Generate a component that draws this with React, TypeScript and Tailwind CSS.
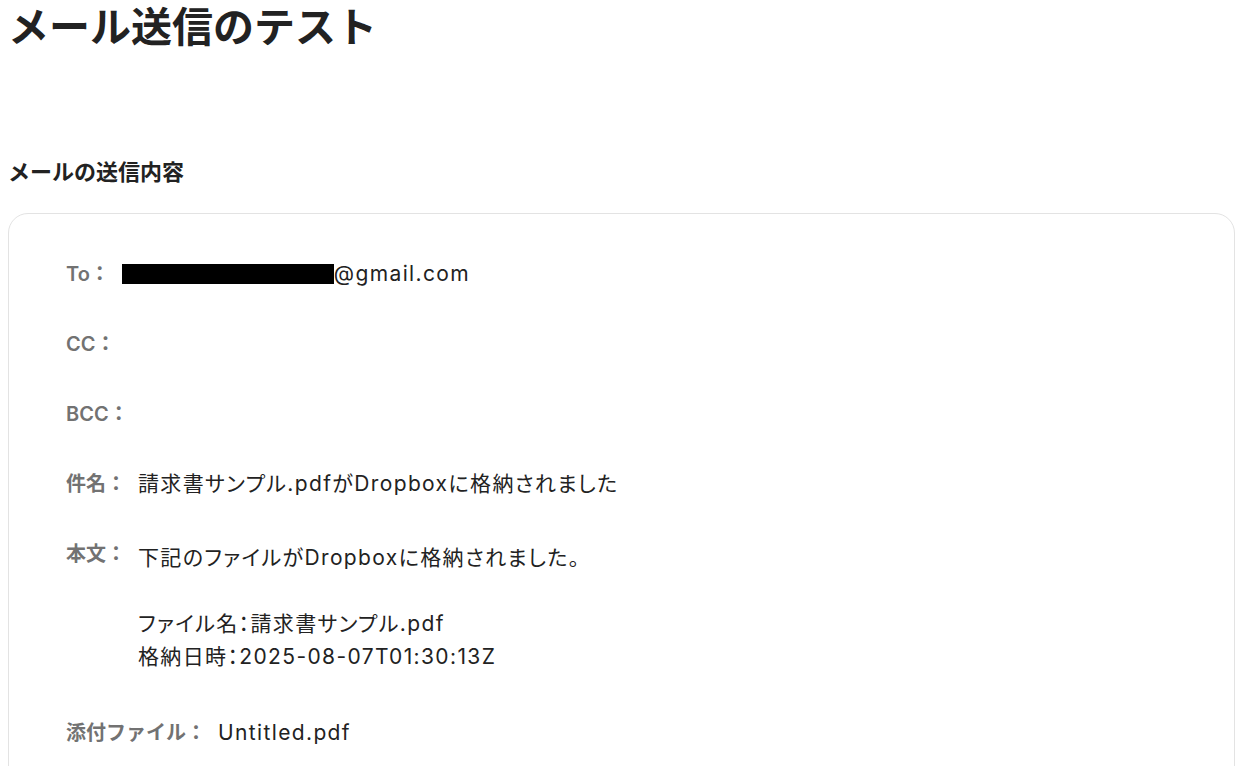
import React from "react";

type RowProps = {
  label: string;
  className?: string;
  children?: React.ReactNode;
};

function Row({ label, className, children }: RowProps) {
  return (
    <div className={"flex items-start gap-3 " + (className ?? "")}>
      <span className="shrink-0 text-[20px] leading-[30px] font-semibold text-[#727272]">{label}</span>
      <div
        className="text-[21px] leading-[30px] tracking-[0.065em] text-[#222]"
        style={{ fontFeatureSettings: '"palt"' }}
      >
        {children}
      </div>
    </div>
  );
}

export default function App() {
  return (
    <div
      className="min-h-screen bg-white pl-2 pr-[6px] text-[#222]"
      style={{ fontFamily: 'Inter, "Noto Sans CJK JP", sans-serif' }}
    >
      <h1 className="pt-[3px] text-[41px] leading-[48px] font-bold">メール送信のテスト</h1>
      <h2 className="mt-[106px] text-[22px] leading-[30px] font-semibold">メールの送信内容</h2>
      <div className="mt-[26px] h-[600px] rounded-[20px] border border-[#e3e3e3] pl-[57px] pt-[45px]">
        <div className="flex flex-col gap-10">
          <Row label="To：">
            <span className="flex items-center">
              <span className="inline-block h-[20px] w-[212px] bg-black" />
              <span>@gmail.com</span>
            </span>
          </Row>
          <Row label="CC：" />
          <Row label="BCC：" />
          <Row label="件名：">請求書サンプル.pdfがDropboxに格納されました</Row>
          <Row label="本文：">
            <div className="whitespace-pre-wrap leading-[33px] pt-[2px]">
              {"下記のファイルがDropboxに格納されました。\n\nファイル名：請求書サンプル.pdf\n格納日時：2025-08-07T01:30:13Z"}
            </div>
          </Row>
          <Row label="添付ファイル：" className="mt-[5px]">
            Untitled.pdf
          </Row>
        </div>
      </div>
    </div>
  );
}
